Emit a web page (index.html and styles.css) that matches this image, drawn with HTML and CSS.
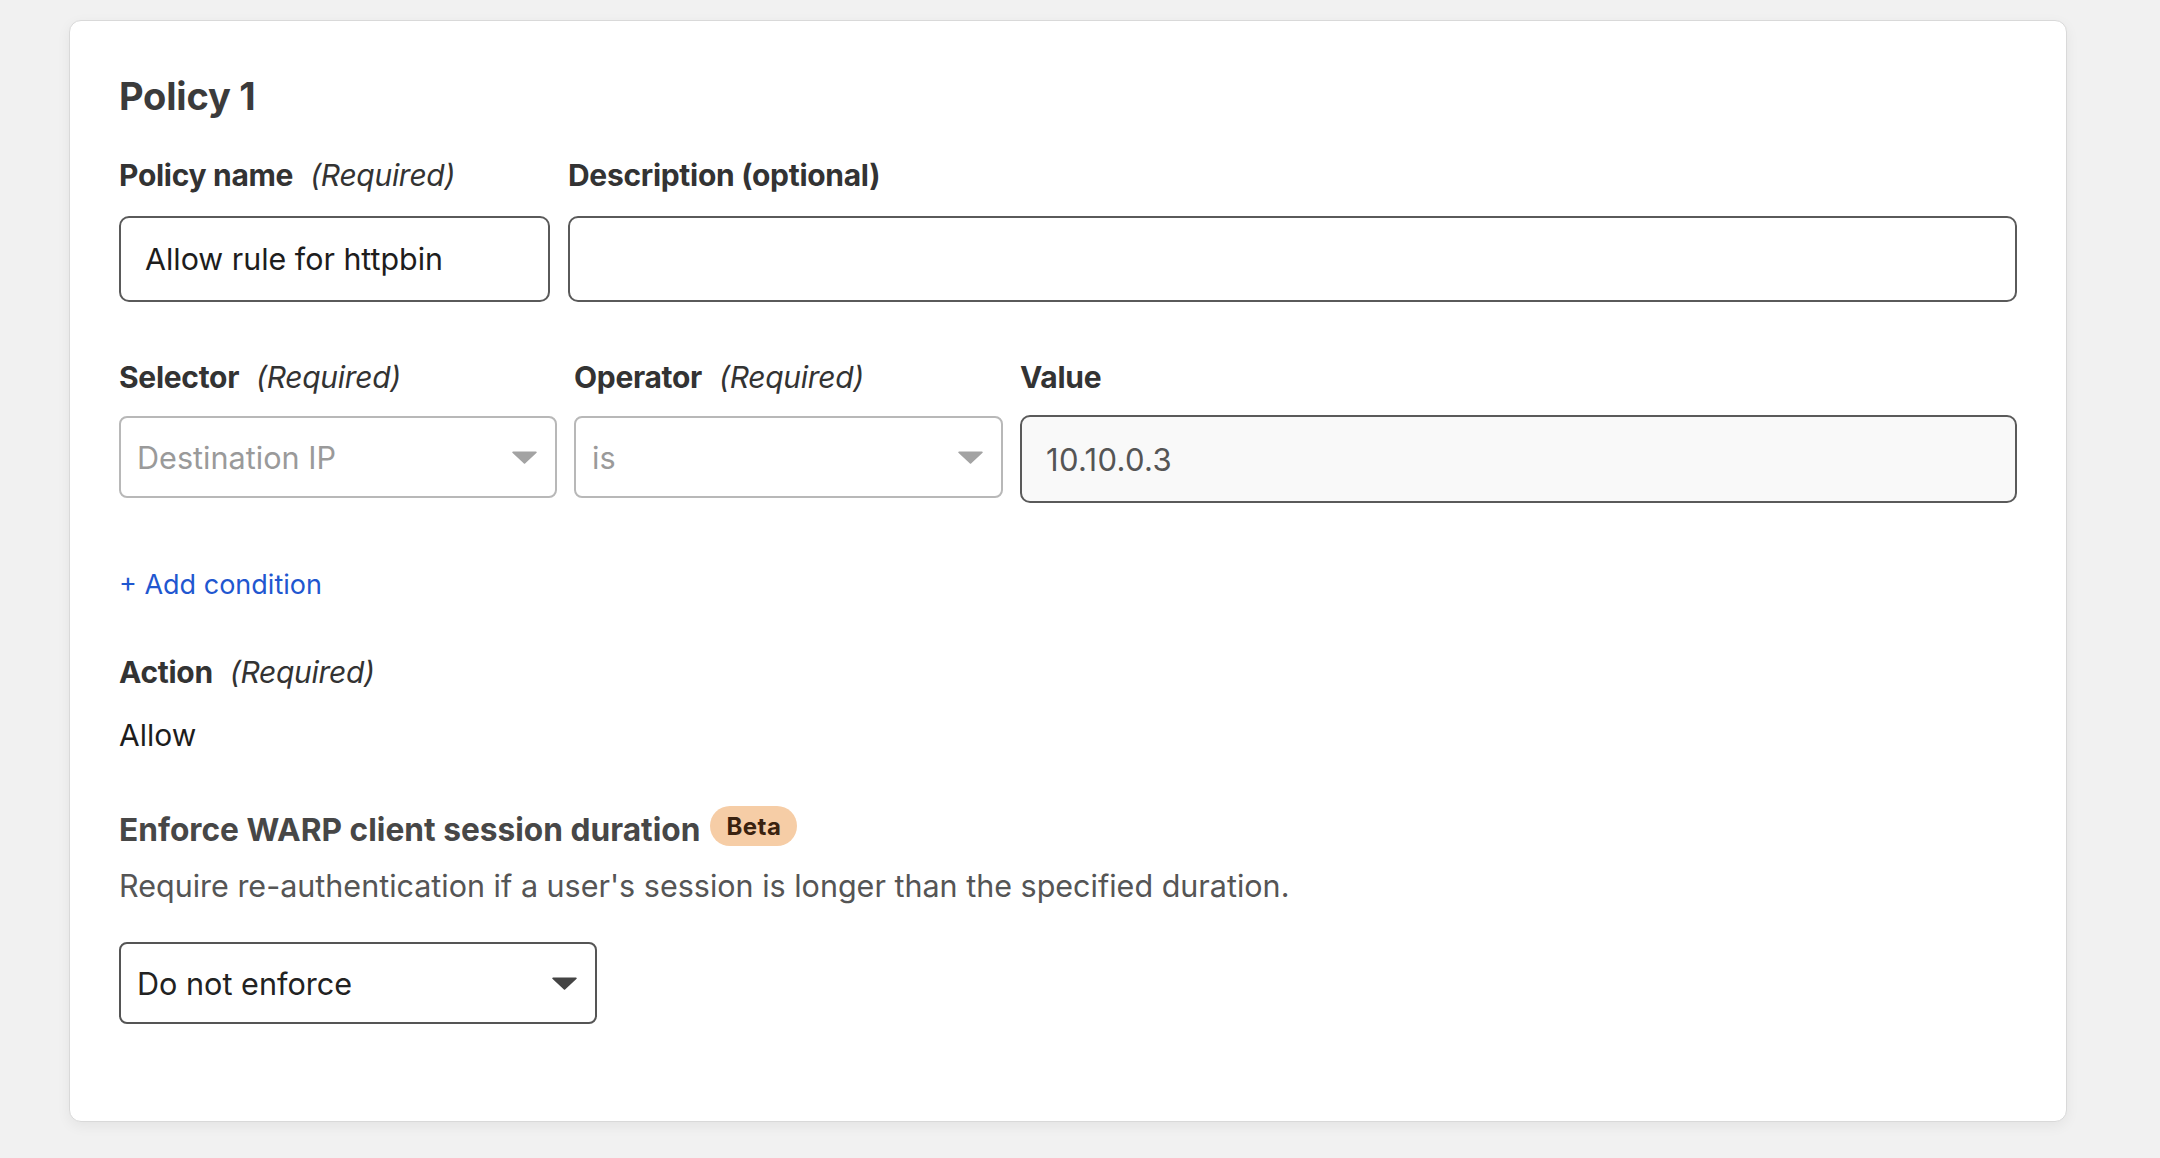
FILE: index.html
```html
<!DOCTYPE html>
<html lang="en">
<head>
<meta charset="utf-8">
<title>Policy 1</title>
<link rel="stylesheet" href="styles.css">
</head>
<body>
<div class="page">
  <section class="card">
    <h2 class="title">Policy 1</h2>

    <div class="row row-name">
      <div class="field">
        <div class="label"><b>Policy name</b><i>(Required)</i></div>
        <div class="input dark">Allow rule for httpbin</div>
      </div>
      <div class="field">
        <div class="label"><b>Description (optional)</b></div>
        <div class="input dark"></div>
      </div>
    </div>

    <div class="row row-cond">
      <div class="field">
        <div class="label"><b>Selector</b><i>(Required)</i></div>
        <div class="select light">
          <span class="muted">Destination IP</span>
          <svg class="caret" width="25" height="13" viewBox="0 0 25 13"><path d="M1 0.5h23a.8.8 0 0 1 .6 1.3L13.1 12.4a.8.8 0 0 1-1.2 0L.4 1.8A.8.8 0 0 1 1 .5z" fill="#a3a3a3"/></svg>
        </div>
      </div>
      <div class="field">
        <div class="label"><b>Operator</b><i>(Required)</i></div>
        <div class="select light">
          <span class="muted">is</span>
          <svg class="caret" width="25" height="13" viewBox="0 0 25 13"><path d="M1 0.5h23a.8.8 0 0 1 .6 1.3L13.1 12.4a.8.8 0 0 1-1.2 0L.4 1.8A.8.8 0 0 1 1 .5z" fill="#a3a3a3"/></svg>
        </div>
      </div>
      <div class="field">
        <div class="label"><b>Value</b></div>
        <div class="input value">10.10.0.3</div>
      </div>
    </div>

    <a class="add" href="#">+ Add condition</a>

    <div class="label action-label"><b>Action</b><i>(Required)</i></div>
    <div class="action-value">Allow</div>

    <div class="enforce-head">
      <span class="enforce-title">Enforce WARP client session duration</span>
      <span class="badge">Beta</span>
    </div>
    <p class="enforce-desc">Require re-authentication if a user's session is longer than the specified duration.</p>

    <div class="select dark enforce-select">
      <span>Do not enforce</span>
      <svg class="caret" width="25" height="13" viewBox="0 0 25 13"><path d="M1 0.5h23a.8.8 0 0 1 .6 1.3L13.1 12.4a.8.8 0 0 1-1.2 0L.4 1.8A.8.8 0 0 1 1 .5z" fill="#444"/></svg>
    </div>
  </section>
</div>
</body>
</html>
```

FILE: styles.css
```css
* { box-sizing: border-box; }

html, body {
  margin: 0;
  padding: 0;
  background: #f1f1f1;
  font-family: Inter, "Noto Sans", "Liberation Sans", sans-serif;
  color: #333;
}

.page {
  padding: 20px 93px 36px 69px;
}

.card {
  background: #fff;
  border: 1px solid #d9d9d9;
  border-radius: 12px;
  box-shadow: 0 4px 14px rgba(0, 0, 0, 0.06);
  padding: 53px 49px 96px 49px;
  min-height: 1102px;
}

.title {
  margin: 0;
  font-size: 38px;
  line-height: 44px;
  font-weight: 700;
  color: #3b3b3b;
  letter-spacing: -0.2px;
}

.row {
  display: grid;
  align-items: start;
}

.row-name {
  grid-template-columns: 431px 1fr;
  column-gap: 18px;
  margin-top: 41px;
}

.row-cond {
  grid-template-columns: 438px 429px 1fr;
  column-gap: 17px;
  margin-top: 59px;
}

.label {
  font-size: 30px;
  line-height: 32px;
  color: #333;
  letter-spacing: -0.3px;
  white-space: nowrap;
}

.label b { font-weight: 700; }

.label i {
  font-style: italic;
  font-weight: 400;
  margin-left: 17px;
}

.row-name .label { margin-bottom: 25px; }
.row-cond .label { margin-bottom: 23px; }

.input {
  height: 86px;
  border-radius: 10px;
  border: 2px solid #5a5a5a;
  background: #fff;
  padding: 0 24px;
  display: flex;
  align-items: center;
  font-size: 30.4px;
  color: #1d1d1d;
}

.input.value {
  height: 88px;
  margin-top: -1px;
  background: #f9f9f9;
  color: #555;
  font-size: 31px;
  letter-spacing: 0.3px;
}

.select {
  height: 82px;
  border-radius: 8px;
  display: flex;
  align-items: center;
  justify-content: space-between;
  padding: 0 18px 0 16px;
  font-size: 30.6px;
  color: #222;
  background: #fff;
}

.select.light { border: 2px solid #b8b8b8; }
.select.dark { border: 2px solid #555; }

.muted { color: #9a9a9a; }

.caret { flex: none; }

.add {
  display: block;
  width: max-content;
  margin-top: 66px;
  font-size: 27px;
  line-height: 32px;
  color: #1f57d0;
  text-decoration: none;
}

.action-label { margin-top: 55px; }

.action-value {
  margin-top: 30px;
  font-size: 30px;
  line-height: 35px;
  color: #1d1d1d;
}

.enforce-head {
  margin-top: 53px;
  display: flex;
  align-items: flex-end;
  gap: 10px;
}

.enforce-title {
  font-size: 31.7px;
  line-height: 32px;
  font-weight: 700;
  color: #474747;
  white-space: nowrap;
}

.badge {
  height: 40px;
  padding: 0 16px;
  border-radius: 20px;
  background: #f6cda6;
  color: #3a220f;
  font-size: 24px;
  font-weight: 700;
  letter-spacing: 0.5px;
  display: inline-flex;
  align-items: center;
}

.enforce-desc {
  margin: 23px 0 0 0;
  font-size: 30.5px;
  line-height: 34px;
  color: #555;
}

.enforce-select {
  margin-top: 39px;
  width: 478px;
}
```
